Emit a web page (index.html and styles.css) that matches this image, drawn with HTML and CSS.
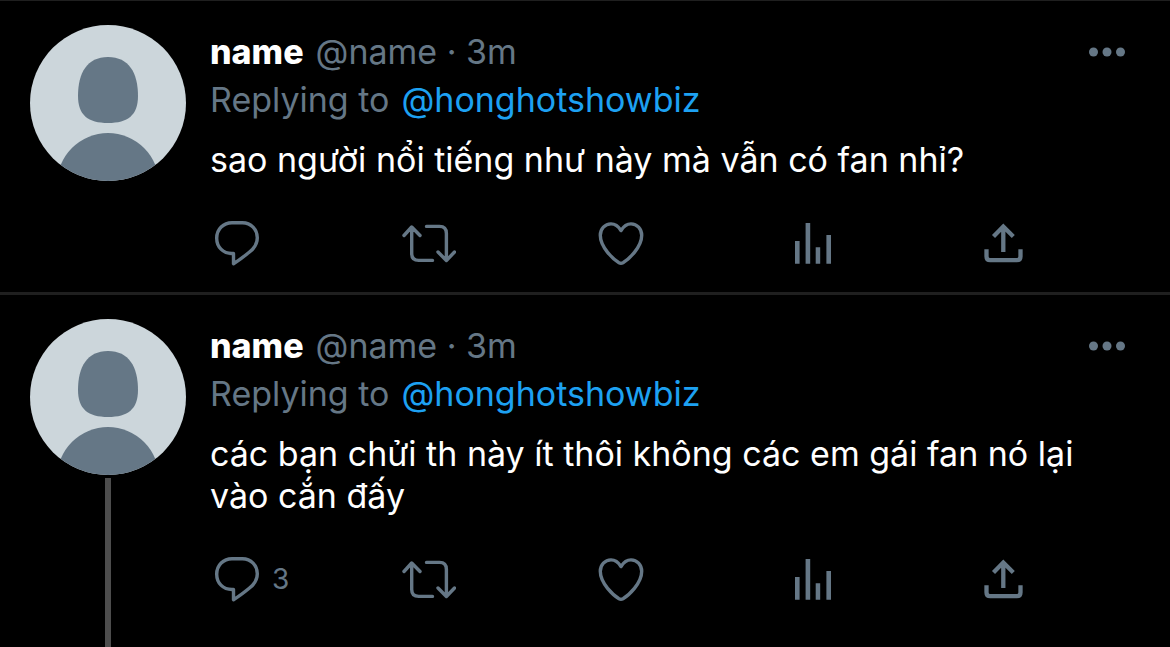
FILE: index.html
```html
<!DOCTYPE html>
<html lang="vi">
  <head>
    <meta charset="utf-8">
    <title>Replies</title>
    <meta name="viewport" content="width=device-width, initial-scale=1">
    <link rel="stylesheet" href="styles.css">
  </head>
  <body>
    <!-- shared icons -->
    <svg class="sprite" aria-hidden="true">
      <symbol id="avatar" viewBox="0 0 156 156">
        <rect width="156" height="156" fill="#ccd6db"/>
        <path d="M78 32C99 32 108 48 108 71C108 90 98 98 78 98C58 98 48 90 48 71C48 48 57 32 78 32Z" fill="#657786"/>
        <circle cx="78" cy="159" r="51" fill="#657786"/>
      </symbol>
      <symbol id="more" viewBox="0 0 38 10">
        <circle cx="5.5" cy="5" r="4.5" fill="currentColor"/>
        <circle cx="19" cy="5" r="4.5" fill="currentColor"/>
        <circle cx="32.5" cy="5" r="4.5" fill="currentColor"/>
      </symbol>
      <symbol id="reply" viewBox="0 0 54 54">
        <path d="M23.5 37.5H22C13 37.5 6.7 31 6.7 22.2C6.7 13.2 13.5 6.7 22 6.7H32.5C41 6.7 47.3 13.5 47.3 21.8C47.3 28 44 32.5 39.5 36C35 39.7 29.5 44 23.5 47.7Z" fill="none" stroke="currentColor" stroke-width="3.4" stroke-linejoin="round"/>
      </symbol>
      <symbol id="retweet" viewBox="0 0 54 54">
        <path d="M2 19.5L9.7 11L18 19.5M9.7 11.5V37.5Q9.7 44.4 16.7 44.4H30.5M24.5 10.4H37.5Q44.4 10.4 44.4 17.4V43.5M36 36L44.4 44.5L52.5 36" fill="none" stroke="currentColor" stroke-width="3.4" stroke-linecap="round" stroke-linejoin="round"/>
      </symbol>
      <symbol id="like" viewBox="0 0 54 54">
        <path d="M27 14.5C24.5 10.5 21 7.9 17 7.9C11 7.9 6.3 12.8 6.3 19.3C6.3 31.5 19.5 43.5 25 46.7Q27 47.8 29 46.7C34.5 43.5 47.7 31.5 47.7 19.3C47.7 12.8 43 7.9 37 7.9C33 7.9 29.5 10.5 27 14.5Z" fill="none" stroke="currentColor" stroke-width="3.4" stroke-linejoin="round"/>
      </symbol>
      <symbol id="stats" viewBox="0 0 54 54">
        <path d="M9 25h4.6v22.7H9zM19.6 7h4.6v40.7h-4.6zM29.7 31.3h4.5v16.4h-4.5zM40.4 19H45v28.7h-4.6z" fill="currentColor"/>
      </symbol>
      <symbol id="share" viewBox="0 0 54 54">
        <path d="M15.5 20.5L25.3 10.5L35.3 20.5M25.3 11V36M8.5 33.3V40.5Q8.5 44.2 12.2 44.2H38.8Q42.5 44.2 42.5 40.5V33.3" fill="none" stroke="currentColor" stroke-width="4.3"/>
      </symbol>
    </svg>

    <main class="timeline">
      <article class="tweet">
        <div class="side">
          <svg class="avatar" role="img" aria-label="name"><use href="#avatar"/></svg>
        </div>
        <div class="content">
          <header class="tweet-header">
            <p class="author"><strong>name</strong> <span>@name · 3m</span></p>
            <button class="more" aria-label="More"><svg><use href="#more"/></svg></button>
          </header>
          <p class="replying"><span>Replying to</span> <a href="#">@honghotshowbiz</a></p>
          <p class="text">sao người nổi tiếng như này mà vẫn có fan nhỉ?</p>
          <div class="actions">
            <button aria-label="Reply"><svg><use href="#reply"/></svg></button>
            <button aria-label="Retweet"><svg><use href="#retweet"/></svg></button>
            <button aria-label="Like"><svg><use href="#like"/></svg></button>
            <button aria-label="Stats"><svg><use href="#stats"/></svg></button>
            <button aria-label="Share"><svg><use href="#share"/></svg></button>
          </div>
        </div>
      </article>

      <article class="tweet">
        <div class="side">
          <svg class="avatar" role="img" aria-label="name"><use href="#avatar"/></svg>
          <div class="thread-line"></div>
        </div>
        <div class="content">
          <header class="tweet-header">
            <p class="author"><strong>name</strong> <span>@name · 3m</span></p>
            <button class="more" aria-label="More"><svg><use href="#more"/></svg></button>
          </header>
          <p class="replying"><span>Replying to</span> <a href="#">@honghotshowbiz</a></p>
          <p class="text">các bạn chửi th này ít thôi không các em gái fan nó lại vào cắn đấy</p>
          <div class="actions">
            <button aria-label="Reply"><svg><use href="#reply"/></svg><span>3</span></button>
            <button aria-label="Retweet"><svg><use href="#retweet"/></svg></button>
            <button aria-label="Like"><svg><use href="#like"/></svg></button>
            <button aria-label="Stats"><svg><use href="#stats"/></svg></button>
            <button aria-label="Share"><svg><use href="#share"/></svg></button>
          </div>
        </div>
      </article>
    </main>
  </body>
</html>
```
FILE: styles.css
```css
* {
  box-sizing: border-box;
}
body {
  margin: 0;
  background-color: #000;
  color: #fff;
  font-family: Inter, "Noto Sans", sans-serif;
  font-size: 34px;
}
p {
  margin: 0;
}
button {
  display: flex;
  align-items: center;
  padding: 0;
  border: 0;
  background: none;
  color: #657786;
  font-family: inherit;
  cursor: pointer;
}
.sprite {
  position: absolute;
  width: 0;
  height: 0;
}
.timeline {
  display: flex;
  flex-direction: column;
  min-height: 100vh;
  border-top: 1px solid #1f1f1f;
}
.tweet {
  display: flex;
  gap: 24px;
  padding: 24px 0 0 30px;
}
.tweet + .tweet {
  flex: 1;
  border-top: 3px solid #1f1f1f;
}
.side {
  display: flex;
  flex-direction: column;
  align-items: center;
  gap: 3px;
}
.avatar {
  display: block;
  flex-shrink: 0;
  width: 156px;
  height: 156px;
  border-radius: 50%;
}
.thread-line {
  flex: 1;
  width: 6px;
  background-color: #4d4d4d;
}
.content {
  flex: 1;
  min-width: 0;
  padding: 3px 0 22px;
}
.tweet-header {
  display: flex;
  align-items: center;
  justify-content: space-between;
  padding-right: 44px;
}
.author,
.replying {
  display: flex;
  gap: 12px;
  color: #657786;
  line-height: 48px;
}
.author strong {
  color: #fff;
  font-weight: 800;
}
.replying a {
  color: #1da1f2;
  text-decoration: none;
}
.more svg {
  width: 38px;
  height: 10px;
}
.text {
  padding: 15px 44px 35px 0;
  line-height: 42px;
}
.actions {
  display: grid;
  grid-template-columns: repeat(5, 1fr);
}
.actions button {
  gap: 8px;
  font-size: 28px;
}
.actions svg {
  width: 54px;
  height: 54px;
}
```
